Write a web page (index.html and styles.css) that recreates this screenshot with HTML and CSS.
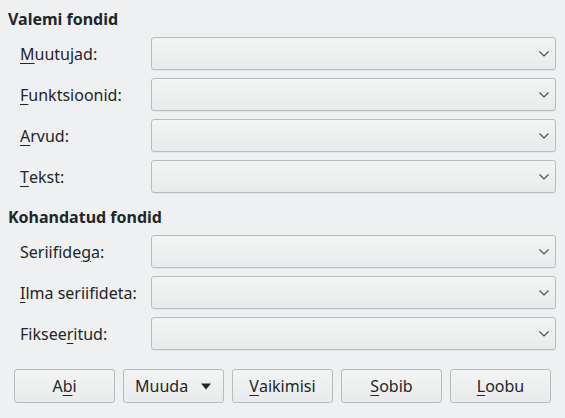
FILE: index.html
```html
<!DOCTYPE html>
<html lang="et">
<head>
<meta charset="utf-8">
<title>Fondid</title>
<link rel="stylesheet" href="styles.css">
</head>
<body>
<div class="dialog">
  <h2 class="heading">Valemi fondid</h2>
  <div class="grid">
    <label class="label"><u>M</u>uutujad:</label>
    <div class="combo"><svg class="chev" width="10" height="6" viewBox="0 0 10 6"><path d="M0.5 0.5 L5 5 L9.5 0.5" fill="none" stroke="#4d4f51" stroke-width="1.2"/></svg></div>
    <label class="label"><u>F</u>unktsioonid:</label>
    <div class="combo"><svg class="chev" width="10" height="6" viewBox="0 0 10 6"><path d="M0.5 0.5 L5 5 L9.5 0.5" fill="none" stroke="#4d4f51" stroke-width="1.2"/></svg></div>
    <label class="label"><u>A</u>rvud:</label>
    <div class="combo"><svg class="chev" width="10" height="6" viewBox="0 0 10 6"><path d="M0.5 0.5 L5 5 L9.5 0.5" fill="none" stroke="#4d4f51" stroke-width="1.2"/></svg></div>
    <label class="label"><u>T</u>ekst:</label>
    <div class="combo"><svg class="chev" width="10" height="6" viewBox="0 0 10 6"><path d="M0.5 0.5 L5 5 L9.5 0.5" fill="none" stroke="#4d4f51" stroke-width="1.2"/></svg></div>
  </div>
  <h2 class="heading second">Kohandatud fondid</h2>
  <div class="grid">
    <label class="label">Seriifide<u>g</u>a:</label>
    <div class="combo"><svg class="chev" width="10" height="6" viewBox="0 0 10 6"><path d="M0.5 0.5 L5 5 L9.5 0.5" fill="none" stroke="#4d4f51" stroke-width="1.2"/></svg></div>
    <label class="label"><u>I</u>lma seriifideta:</label>
    <div class="combo"><svg class="chev" width="10" height="6" viewBox="0 0 10 6"><path d="M0.5 0.5 L5 5 L9.5 0.5" fill="none" stroke="#4d4f51" stroke-width="1.2"/></svg></div>
    <label class="label">Fiksee<u>r</u>itud:</label>
    <div class="combo"><svg class="chev" width="10" height="6" viewBox="0 0 10 6"><path d="M0.5 0.5 L5 5 L9.5 0.5" fill="none" stroke="#4d4f51" stroke-width="1.2"/></svg></div>
  </div>
  <div class="buttons">
    <button class="btn">A<u>b</u>i</button>
    <button class="btn menu"><span>Muuda</span><svg width="10" height="7" viewBox="0 0 10 7"><path d="M0 0.5 H10 L5 6.5 Z" fill="#232627"/></svg></button>
    <button class="btn"><u>V</u>aikimisi</button>
    <button class="btn"><u>S</u>obib</button>
    <button class="btn"><u>L</u>oobu</button>
  </div>
</div>
</body>
</html>
```

FILE: styles.css
```css
html, body {
  margin: 0;
  padding: 0;
  background: #eff0f1;
}
body {
  font-family: "Noto Sans", "Open Sans", sans-serif;
  font-size: 16px;
  color: #232627;
  width: 565px;
  height: 418px;
  overflow: hidden;
}
.dialog {
  padding: 8px 9px 0 8px;
}
.heading {
  margin: 0;
  font-size: 16px;
  font-weight: bold;
  line-height: 22px;
  height: 22px;
}
.heading.second {
  margin-top: 13px;
}
.grid {
  margin-top: 7px;
  margin-left: 12px;
  display: grid;
  grid-template-columns: 131px 1fr;
  row-gap: 8px;
}
.label {
  display: flex;
  align-items: center;
  line-height: 22px;
  white-space: nowrap;
}
u {
  text-decoration: underline;
  text-underline-offset: 3px;
  text-decoration-thickness: 1px;
}
.combo {
  height: 33px;
  box-sizing: border-box;
  border: 1px solid #babbbc;
  border-radius: 3px;
  background: linear-gradient(#f3f4f4, #e9eaeb);
  box-shadow: 0 1px 0 rgba(0,0,0,0.04);
  display: flex;
  align-items: center;
  justify-content: flex-end;
  padding-right: 6px;
}
.chev {
  display: block;
}
.buttons {
  margin-top: 19px;
  margin-left: 6px;
  margin-right: 5px;
  display: flex;
  gap: 8px;
}
.btn {
  width: 101px;
  height: 34px;
  box-sizing: border-box;
  border: 1px solid #babbbc;
  border-radius: 3px;
  background: linear-gradient(#f3f4f4, #e9eaeb);
  font-family: inherit;
  font-size: 16px;
  color: #232627;
  padding: 0;
  display: flex;
  align-items: center;
  justify-content: center;
}
.btn.menu {
  justify-content: space-between;
  padding: 0 12px 0 11px;
}
.btn.menu svg {
  display: block;
}
```
